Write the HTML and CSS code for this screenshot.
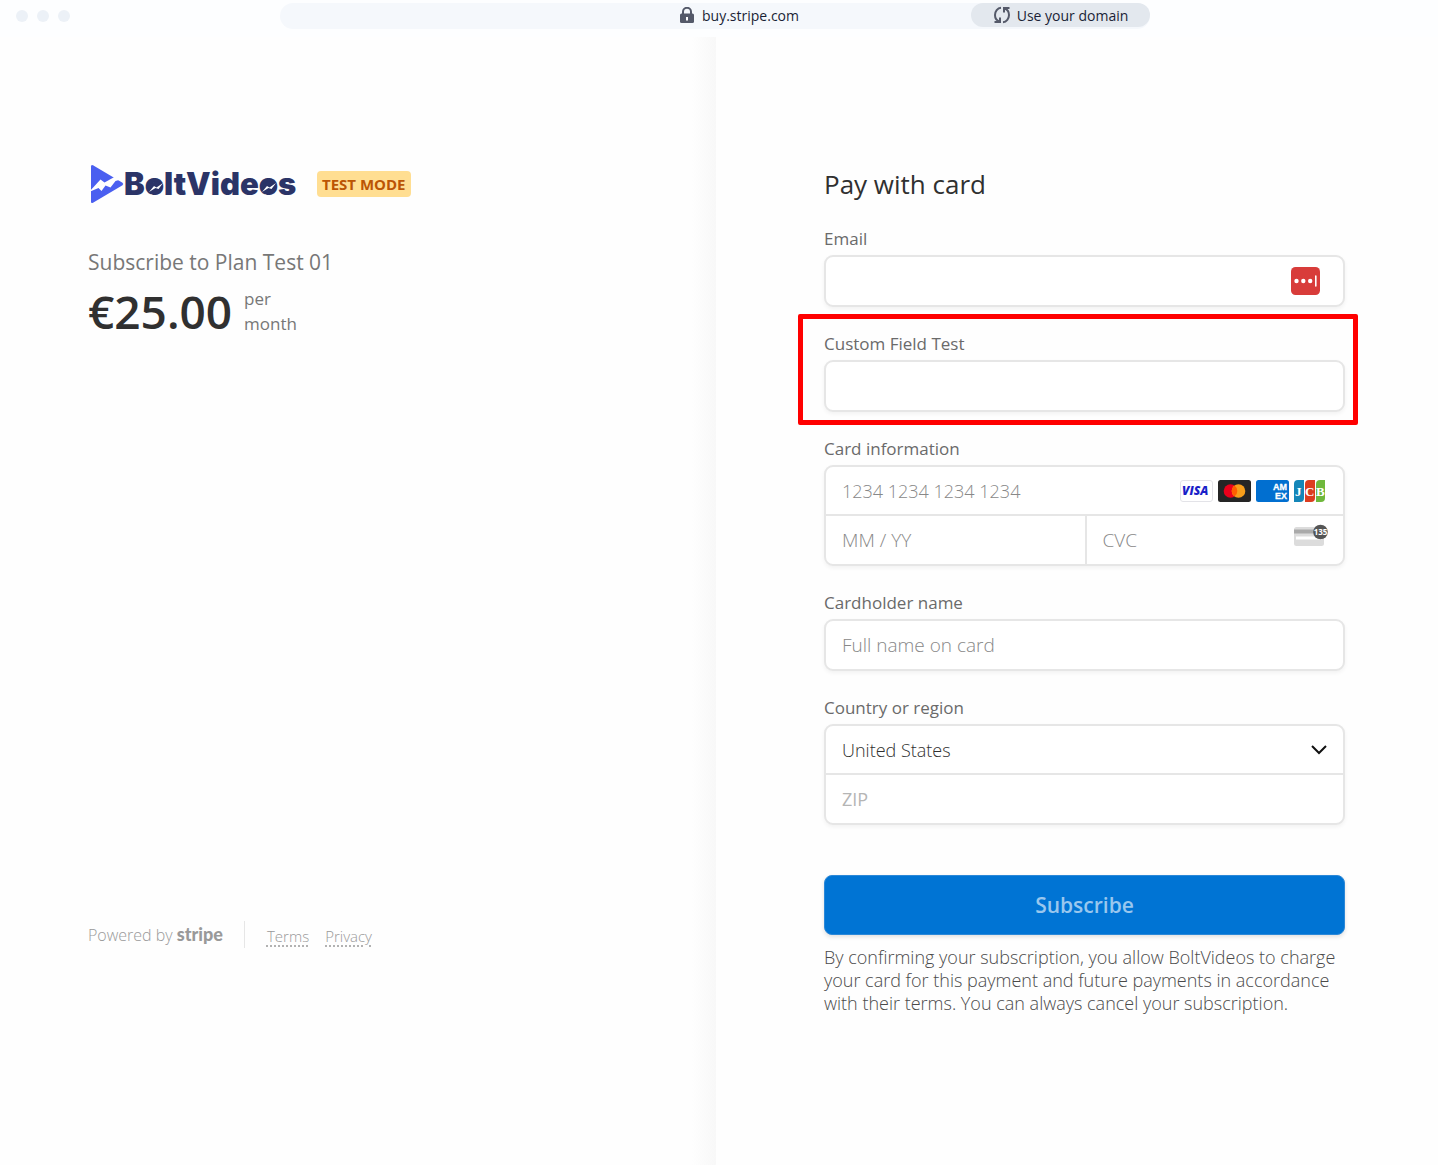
FILE: index.html
```html
<!DOCTYPE html>
<html lang="en">
<head>
    <meta charset="UTF-8">
    <meta name="viewport" content="width=device-width, initial-scale=1.0">
    <title>BoltVideos - Checkout</title>
    <link rel="stylesheet" href="styles.css">
</head>
<body>
    <header class="browser-bar">
        <div class="window-dots">
            <span class="dot"></span>
            <span class="dot"></span>
            <span class="dot"></span>
        </div>
        <div class="address">
            <div class="address-url">
                <svg class="lock-icon" width="14" height="16" viewBox="0 0 14 16" aria-hidden="true">
                    <path d="M3 8V4.8a4 4 0 0 1 8 0V8" fill="none" stroke="#545969" stroke-width="2"/>
                    <rect x="0" y="6.5" width="14" height="9.5" rx="1.5" fill="#545969"/>
                    <path d="M7 10v3.500" stroke="#fff" stroke-width="2"/>
                </svg>
                <span>buy.stripe.com</span>
            </div>
            <button type="button" class="domain-button">
                <svg width="18" height="18" viewBox="0 0 18 18" fill="none" stroke="#545969" stroke-width="2" aria-hidden="true">
                    <path d="M8 1.8C4.500 2 2 5.500 2 9c0 3 1.500 5.500 4.500 6.500M1.500 16H7v-4.500"/>
                    <path d="M10 16.200c3.500-.2 6-3.700 6-7.200 0-3-1.500-5.500-4.500-6.500M16.500 2H11v4.500"/>
                </svg>
                Use your domain
            </button>
        </div>
    </header>

    <main class="checkout">
        <section class="summary">
            <div class="brand">
                <svg class="brand-logo" width="208" height="40" viewBox="0 0 208 40" role="img" aria-label="BoltVideos">
                    <path d="M3 2.500Q3 .2 5 1.300L34.500 18.700Q36 20 34.500 21.300L5 38.700Q3 39.800 3 37.500z" fill="#4a5ff0"/>
                    <path d="M1 28L12.500 15.500 16.500 18.500 30 11 31 16 27.500 17 22.500 23.500 17.500 21.500 13.500 27 10.500 24z" fill="#fefefe"/>
                    <text class="brand-text" x="36" y="31">BoltVideos</text>
                    <circle cx="68" cy="23.500" r="6" fill="#2b3467"/>
                    <circle cx="181" cy="23.500" r="6" fill="#2b3467"/>
                    <path d="M61 28l5-6 2.500 1.500L75 19l-4.500 6-3-1z" fill="#fff"/>
                    <path d="M174 28l5-6 2.500 1.500L188 19l-4.500 6-3-1z" fill="#fff"/>
                </svg>
                <span class="test-badge">TEST MODE</span>
            </div>
            <h1 class="plan-name">Subscribe to Plan Test 01</h1>
            <div class="price">
                <span class="price-amount">€25.00</span>
                <span class="price-period">per<br>month</span>
            </div>
            <footer class="footer">
                <a href="#" class="powered">Powered by <span class="stripe-mark">stripe</span></a>
                <nav class="footer-links">
                    <a href="#" class="footer-link">Terms</a>
                    <a href="#" class="footer-link">Privacy</a>
                </nav>
            </footer>
        </section>

        <form class="payment">
            <h2 class="payment-title">Pay with card</h2>

            <div class="field">
                <label class="field-label" for="email">Email</label>
                <div class="box">
                    <input class="input" id="email" type="email">
                    <svg class="box-icon" width="30" height="30" viewBox="0 0 30 30" aria-hidden="true">
                        <rect x="1" y="1" width="29" height="28" rx="4.500" fill="#d83c3a"/>
                        <circle cx="6.500" cy="15" r="2.200" fill="#fff"/>
                        <circle cx="13.300" cy="15" r="2.200" fill="#fff"/>
                        <circle cx="20.200" cy="15" r="2.200" fill="#fff"/>
                        <rect x="25" y="9.200" width="1.600" height="11.500" rx=".8" fill="#fff"/>
                    </svg>
                </div>
            </div>

            <div class="field field-highlight">
                <label class="field-label" for="custom">Custom Field Test</label>
                <div class="box">
                    <input class="input" id="custom" type="text">
                </div>
            </div>

            <div class="field">
                <label class="field-label" for="card-number">Card information</label>
                <div class="box box-stack">
                    <div class="box-row">
                        <input class="input input-number" id="card-number" type="text" placeholder="1234 1234 1234 1234">
                        <div class="card-brands">
                            <svg width="33" height="22" viewBox="0 0 33 22" role="img" aria-label="Visa">
                                <rect x=".5" y=".5" width="32" height="21" rx="2.500" fill="#fff" stroke="#e3e3e8"/>
                                <text class="visa-text" x="2" y="15">VISA</text>
                            </svg>
                            <svg width="33" height="22" viewBox="0 0 33 22" role="img" aria-label="Mastercard">
                                <rect width="33" height="22" rx="2.500" fill="#252525"/>
                                <circle cx="12.500" cy="11" r="6.800" fill="#eb001b"/>
                                <circle cx="20.500" cy="11" r="6.800" fill="#f79e1b"/>
                                <path d="M16.500 5.500a6.800 6.800 0 0 1 0 11 6.800 6.800 0 0 1 0-11z" fill="#ff5f00"/>
                            </svg>
                            <svg width="33" height="22" viewBox="0 0 33 22" role="img" aria-label="American Express">
                                <rect width="33" height="22" rx="2.500" fill="#016fd0"/>
                                <text class="amex-text" x="17" y="10">AM</text>
                                <text class="amex-text" x="19" y="19">EX</text>
                            </svg>
                            <svg width="33" height="22" viewBox="0 0 33 22" role="img" aria-label="JCB">
                                <path d="M4 0h6v18a4 4 0 0 1-4 4H0V4a4 4 0 0 1 4-4z" fill="#1486b8"/>
                                <path d="M15 0h6v18a4 4 0 0 1-4 4h-6V4a4 4 0 0 1 4-4z" fill="#dc3d1f"/>
                                <path d="M26 0h5v18a4 4 0 0 1-4 4h-5V4a4 4 0 0 1 4-4z" fill="#6fb83c"/>
                                <text class="jcb-text" x="1" y="15.500">J</text>
                                <text class="jcb-text" x="11" y="15.500">C</text>
                                <text class="jcb-text" x="22" y="15.500">B</text>
                            </svg>
                        </div>
                    </div>
                    <div class="box-row box-split">
                        <input class="input" type="text" placeholder="MM / YY" aria-label="Expiration">
                        <div class="cvc">
                            <input class="input" type="text" placeholder="CVC" aria-label="CVC">
                            <svg class="cvc-icon" width="34" height="24" viewBox="0 0 34 24" aria-hidden="true">
                                <rect y="3" width="30" height="19" rx="2.500" fill="#dcdcdc"/>
                                <rect y="5.500" width="30" height="4" fill="#aaa"/>
                                <rect x="2" y="12.500" width="26" height="3" fill="#fff"/>
                                <circle cx="26.500" cy="8" r="7.300" fill="#555"/>
                                <text class="cvc-text" x="26.500" y="10.700" text-anchor="middle">135</text>
                            </svg>
                        </div>
                    </div>
                </div>
            </div>

            <div class="field">
                <label class="field-label" for="name">Cardholder name</label>
                <div class="box">
                    <input class="input" id="name" type="text" placeholder="Full name on card">
                </div>
            </div>

            <div class="field">
                <label class="field-label" for="country">Country or region</label>
                <div class="box box-stack">
                    <div class="box-row">
                        <select class="input select" id="country">
                            <option>United States</option>
                        </select>
                        <svg class="chevron" width="16" height="10" viewBox="0 0 16 10" aria-hidden="true">
                            <path d="M1 1l7 7 7-7" fill="none" stroke="#111" stroke-width="2"/>
                        </svg>
                    </div>
                    <div class="box-row">
                        <input class="input input-zip" type="text" placeholder="ZIP" aria-label="ZIP">
                    </div>
                </div>
            </div>

            <button type="button" class="submit">Subscribe</button>
            <p class="terms">By confirming your subscription, you allow BoltVideos to charge your card for this payment and future payments in accordance with their terms. You can always cancel your subscription.</p>
        </form>
    </main>
</body>
</html>
```
FILE: styles.css
```css
:root {
    --text: #303030;
    --text-secondary: #6a6a6a;
    --text-muted: #999;
    --border: #e6e6e6;
    --blue: #0074d4;
    --highlight: #ff0000;
}

* {
    margin: 0;
    padding: 0;
    box-sizing: border-box;
}

body {
    min-height: 100vh;
    display: flex;
    flex-direction: column;
    font-family: 'Open Sans', 'Noto Sans', sans-serif;
    color: var(--text);
    background: #fefefe;
}

svg {
    display: block;
    flex-shrink: 0;
}

/* Browser bar */
.browser-bar {
    height: 37px;
    padding: 3px 288px 8px 16px;
    display: flex;
    align-items: stretch;
    background: #fdfeff;
}

.window-dots {
    width: 264px;
    display: flex;
    align-items: center;
    gap: 9px;
}

.dot {
    width: 12px;
    height: 12px;
    border-radius: 50%;
    background: #ecf1f7;
}

.address {
    flex: 1;
    display: flex;
    align-items: flex-start;
    background: #f5f8fc;
    border-radius: 13px;
}

.address-url {
    flex: 1;
    height: 24px;
    padding-left: 228px;
    display: flex;
    align-items: center;
    justify-content: center;
    gap: 8px;
    font-size: 14px;
    color: #1a1f36;
}

.domain-button {
    width: 179px;
    height: 24px;
    display: flex;
    align-items: center;
    justify-content: center;
    gap: 6px;
    border: none;
    border-radius: 12px;
    background: #e3e8ee;
    font-family: inherit;
    font-size: 14px;
    color: #1a1f36;
}

/* Panes */
.checkout {
    flex: 1;
    display: flex;
}

.summary {
    flex: none;
    width: calc(50% - 3px);
    padding: 127px 88px 0;
    background: linear-gradient(to left, #f8f8f8, #fefefe 24px);
}

.payment {
    flex: 1;
    min-width: 0;
    padding: 127px 93px 0 108px;
}

.brand {
    display: flex;
    align-items: center;
    gap: 21px;
}

.brand-text {
    font-family: Inter, sans-serif;
    font-size: 31px;
    font-weight: 900;
    fill: #2b3467;
}

.test-badge {
    padding: 0 5px;
    border-radius: 4px;
    background: #ffde92;
    color: #bb5504;
    font-size: 15px;
    font-weight: 700;
    line-height: 26px;
}

.plan-name {
    margin-top: 42px;
    font-size: 21px;
    font-weight: 400;
    line-height: 32px;
    color: #777;
}

.price {
    display: flex;
    align-items: center;
    gap: 12px;
}

.price-amount {
    font-size: 46px;
    font-weight: 600;
    line-height: 66px;
}

.price-period {
    font-size: 17px;
    line-height: 25px;
    color: #777;
}

.footer {
    margin-top: 575px;
    display: flex;
    align-items: center;
    font-size: 15px;
    font-weight: 300;
    line-height: 26px;
}

.powered {
    padding-right: 21px;
    border-right: 1px solid var(--border);
    color: var(--text-muted);
    font-size: 16px;
    text-decoration: none;
}

.stripe-mark {
    font-family: Lato, sans-serif;
    font-size: 18px;
    font-weight: 900;
}

.footer-links {
    padding: 4px 0 0 22px;
    display: flex;
    gap: 16px;
}

.footer-link {
    color: var(--text-muted);
    text-decoration: underline dotted;
    text-underline-offset: 4px;
}

/* Form */
.payment-title {
    font-size: 26px;
    font-weight: 400;
    line-height: 40px;
    margin-bottom: 23px;
}

.field {
    position: relative;
    margin-bottom: 25px;
}

.field-highlight::after {
    content: "";
    position: absolute;
    inset: -18px -13px -13px -26px;
    border: 5px solid var(--highlight);
    border-radius: 2px;
    pointer-events: none;
}

.field-label {
    display: block;
    margin-bottom: 4px;
    font-size: 17px;
    line-height: 24px;
    color: var(--text-secondary);
}

.box {
    min-height: 52px;
    display: flex;
    align-items: center;
    border: 2px solid var(--border);
    border-radius: 9px;
    background: #fff;
    box-shadow: 0 2px 4px rgba(0, 0, 0, 0.05);
}

.box-stack {
    flex-direction: column;
    align-items: stretch;
}

.box-row {
    height: 47px;
    display: flex;
    align-items: center;
}

.box-row + .box-row {
    height: 50px;
    border-top: 2px solid var(--border);
}

.input {
    flex: 1;
    min-width: 0;
    height: 46px;
    padding: 0 16px;
    border: none;
    outline: none;
    background: transparent;
    font-family: inherit;
    font-size: 19px;
    font-weight: 300;
    color: var(--text);
}

.input::placeholder {
    color: #888;
}

.input-number,
.input-zip,
.select {
    font-size: 18px;
}

.input-zip {
    font-weight: 400;
}

.input-zip::placeholder {
    color: #b5b5b5;
}

.box-icon {
    margin-right: 23px;
}

.card-brands {
    padding-right: 16px;
    display: flex;
    gap: 5px;
}

.visa-text {
    font-size: 12px;
    font-weight: 800;
    font-style: italic;
    fill: #1a1fc8;
}

.amex-text {
    font-family: 'Liberation Sans', sans-serif;
    font-size: 9px;
    font-weight: 700;
    fill: #fff;
    stroke: #fff;
    stroke-width: .3px;
}

.jcb-text {
    font-family: 'Liberation Serif', serif;
    font-size: 13px;
    font-weight: 700;
    fill: #fff;
}

.box-split {
    display: grid;
    grid-template-columns: 1fr 1fr;
}

.box-split .input {
    height: 100%;
}

.cvc {
    height: 100%;
    min-width: 0;
    display: flex;
    align-items: center;
    border-left: 2px solid var(--border);
}

.cvc-icon {
    margin: 0 15px 8px 0;
}

.cvc-text {
    font-size: 8px;
    font-weight: 700;
    fill: #fff;
}

.select {
    appearance: none;
}

.chevron {
    margin-right: 16px;
}

.submit {
    width: 100%;
    height: 60px;
    margin: 25px 0 11px;
    border: 1px solid #2b88d8;
    border-radius: 8px;
    background: var(--blue);
    box-shadow: 0 2px 4px rgba(0, 0, 0, 0.12);
    font-family: inherit;
    font-size: 21px;
    font-weight: 600;
    color: #99c7ee;
}

.terms {
    font-size: 18px;
    font-weight: 300;
    line-height: 23px;
    color: #4a4a4a;
}

@media (max-width: 900px) {
    .checkout {
        flex-direction: column;
    }

    .summary, .payment {
        width: 100%;
        padding: 48px 32px;
    }

    .footer {
        margin-top: 48px;
    }
}
```
